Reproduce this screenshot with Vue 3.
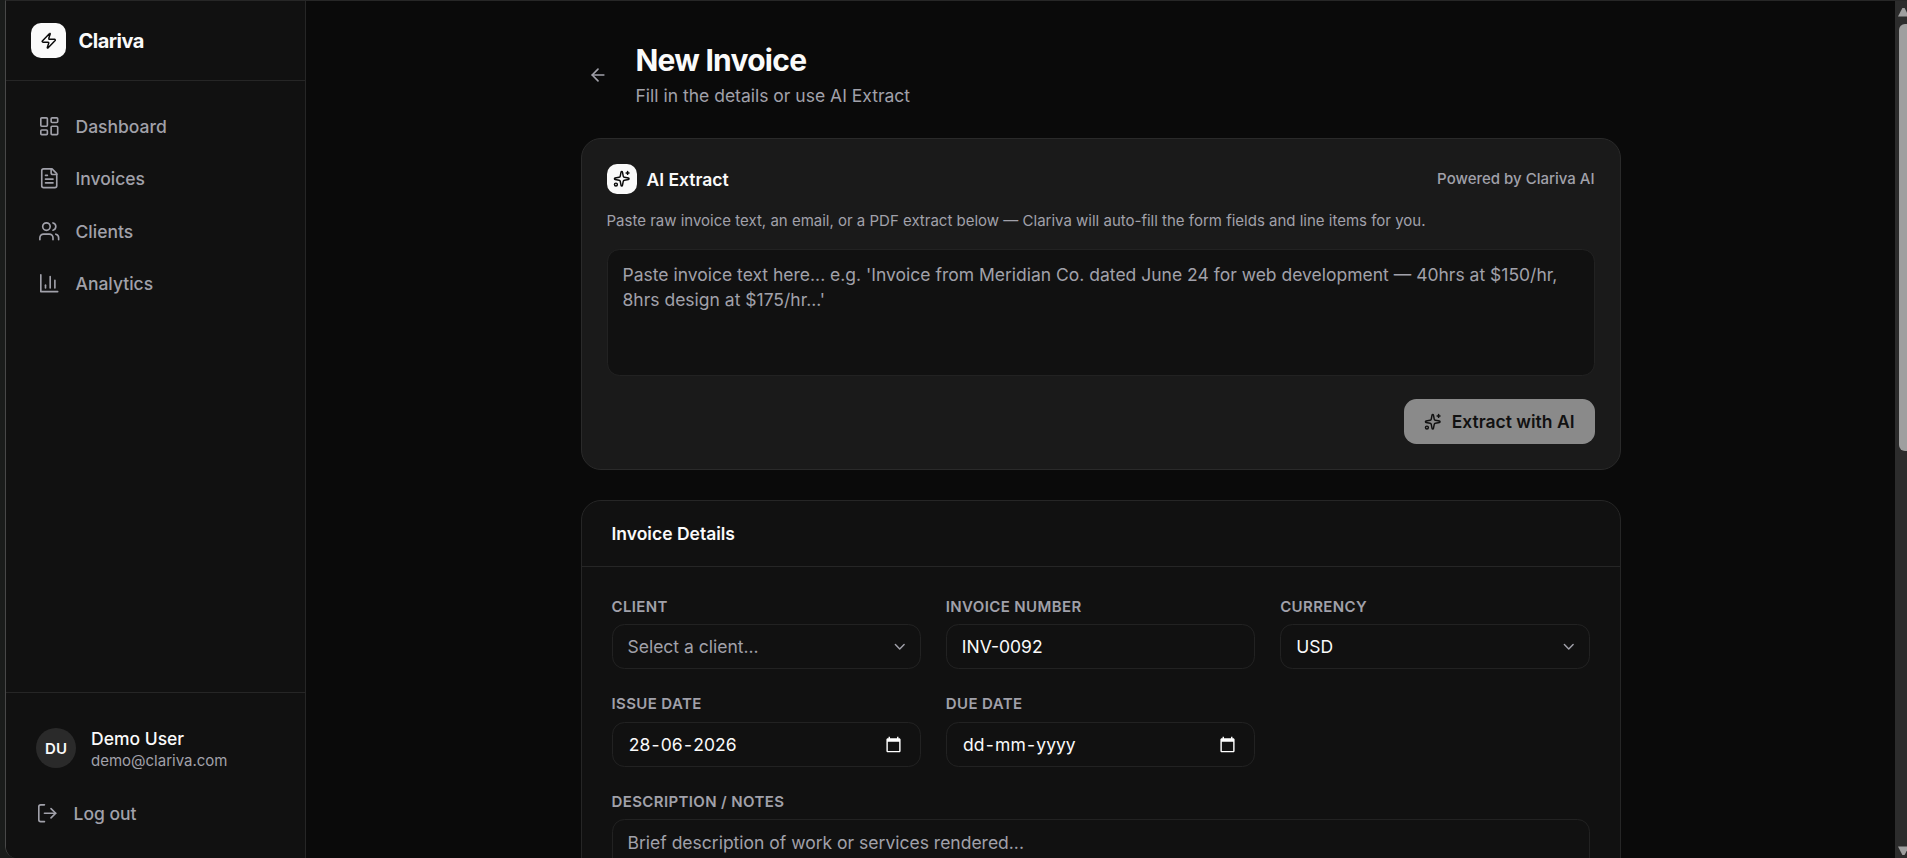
<template>
  <div class="window">
    <div class="app">
      <aside class="sidebar">
        <div class="brand">
          <span class="brand-mark">
            <svg class="icon icon-sm" viewBox="0 0 24 24"><path d="M4 14a1 1 0 0 1-.78-1.63l9.9-10.2a.5.5 0 0 1 .86.46l-1.92 6.02A1 1 0 0 0 13 10h7a1 1 0 0 1 .78 1.63l-9.9 10.2a.5.5 0 0 1-.86-.46l1.92-6.02A1 1 0 0 0 11 14z" /></svg>
          </span>
          <span class="brand-name">Clariva</span>
        </div>

        <nav class="nav">
          <a v-for="item in navItems" :key="item.label" class="nav-item">
            <svg class="icon icon-nav" viewBox="0 0 24 24">
              <path v-for="d in item.paths" :key="d" :d="d" />
            </svg>
            <span>{{ item.label }}</span>
          </a>
        </nav>

        <div class="account">
          <div class="user">
            <span class="avatar">DU</span>
            <div class="user-text">
              <span class="user-name">Demo User</span>
              <span class="user-email">demo@clariva.com</span>
            </div>
          </div>
          <a class="logout">
            <svg class="icon icon-nav" viewBox="0 0 24 24">
              <path d="M9 21H5a2 2 0 0 1-2-2V5a2 2 0 0 1 2-2h4" />
              <path d="m16 17 5-5-5-5" />
              <path d="M21 12H9" />
            </svg>
            <span>Log out</span>
          </a>
        </div>
      </aside>

      <main class="main">
        <div class="content">
          <header class="page-head">
            <button class="back" type="button" aria-label="Back">
              <svg class="icon icon-back" viewBox="0 0 24 24"><path d="m12 19-7-7 7-7" /><path d="M19 12H5" /></svg>
            </button>
            <div class="page-text">
              <h1>New Invoice</h1>
              <p>Fill in the details or use AI Extract</p>
            </div>
          </header>

          <section class="ai-card">
            <div class="ai-head">
              <span class="ai-mark">
                <svg class="icon icon-sm" viewBox="0 0 24 24">
                  <path v-for="d in sparkles" :key="d" :d="d" />
                  <circle cx="4" cy="20" r="2" />
                </svg>
              </span>
              <h2>AI Extract</h2>
              <span class="powered">Powered by Clariva AI</span>
            </div>
            <p class="ai-hint">Paste raw invoice text, an email, or a PDF extract below — Clariva will auto-fill the form fields and line items for you.</p>
            <textarea
              v-model="rawText"
              class="ai-input"
              placeholder="Paste invoice text here... e.g. 'Invoice from Meridian Co. dated June 24 for web development — 40hrs at $150/hr, 8hrs design at $175/hr...'"
            ></textarea>
            <div class="ai-actions">
              <button class="extract" type="button" :disabled="!rawText">
                <svg class="icon icon-sm" viewBox="0 0 24 24">
                  <path v-for="d in sparkles" :key="d" :d="d" />
                  <circle cx="4" cy="20" r="2" />
                </svg>
                <span>Extract with AI</span>
              </button>
            </div>
          </section>

          <section class="details">
            <h2 class="details-head">Invoice Details</h2>
            <div class="grid">
              <div v-for="field in fields" :key="field.label" class="field">
                <span class="label">{{ field.label }}</span>
                <div :class="['control', field.type, { muted: field.placeholder }]">
                  <span v-if="field.type === 'date'"><span v-for="(part, i) in field.value.split('-')" :key="i"><template v-if="i">-</template><span class="date-part">{{ part }}</span></span></span>
                  <span v-else>{{ field.value }}</span>
                  <svg v-if="field.type === 'select'" class="icon chevron" viewBox="0 0 24 24"><path d="m6 9 6 6 6-6" /></svg>
                  <svg v-if="field.type === 'date'" class="calendar" viewBox="0 0 24 24"><path d="M20 3h-1V1h-2v2H7V1H5v2H4c-1.1 0-2 .9-2 2v16c0 1.1.9 2 2 2h16c1.1 0 2-.9 2-2V5c0-1.1-.9-2-2-2zm0 18H4V8h16v13z" /></svg>
                </div>
              </div>
              <div class="field wide">
                <span class="label">Description / Notes</span>
                <textarea v-model="notes" class="notes" placeholder="Brief description of work or services rendered..."></textarea>
              </div>
            </div>
          </section>
        </div>
      </main>

      <div class="scrollbar">
        <svg class="arrow" viewBox="0 0 12 10"><path d="M3 9.5 7.4 1h2.2L14 9.5z" /></svg>
        <div class="thumb"></div>
        <svg class="arrow" viewBox="0 0 12 10"><path d="M3 0.5 7.4 9h2.2L14 .5z" /></svg>
      </div>
    </div>
  </div>
</template>

<script setup>
import { ref } from 'vue'

const rawText = ref('')
const notes = ref('')

const navItems = [
  {
    label: 'Dashboard',
    paths: [
      'M4 3h5a1 1 0 0 1 1 1v7a1 1 0 0 1-1 1H4a1 1 0 0 1-1-1V4a1 1 0 0 1 1-1z',
      'M15 3h5a1 1 0 0 1 1 1v3a1 1 0 0 1-1 1h-5a1 1 0 0 1-1-1V4a1 1 0 0 1 1-1z',
      'M15 12h5a1 1 0 0 1 1 1v7a1 1 0 0 1-1 1h-5a1 1 0 0 1-1-1v-7a1 1 0 0 1 1-1z',
      'M4 16h5a1 1 0 0 1 1 1v3a1 1 0 0 1-1 1H4a1 1 0 0 1-1-1v-3a1 1 0 0 1 1-1z'
    ]
  },
  {
    label: 'Invoices',
    paths: [
      'M15 2H6a2 2 0 0 0-2 2v16a2 2 0 0 0 2 2h12a2 2 0 0 0 2-2V7Z',
      'M14 2v4a2 2 0 0 0 2 2h4',
      'M10 9H8',
      'M16 13H8',
      'M16 17H8'
    ]
  },
  {
    label: 'Clients',
    paths: [
      'M16 21v-2a4 4 0 0 0-4-4H6a4 4 0 0 0-4 4v2',
      'M9 3a4 4 0 1 0 0 8a4 4 0 1 0 0-8',
      'M22 21v-2a4 4 0 0 0-3-3.87',
      'M16 3.13a4 4 0 0 1 0 7.75'
    ]
  },
  {
    label: 'Analytics',
    paths: ['M3 3v18h18', 'M18 17V9', 'M13 17V5', 'M8 17v-3']
  }
]

const sparkles = [
  'M11.017 2.814a1 1 0 0 1 1.966 0l1.051 5.558a2 2 0 0 0 1.594 1.594l5.558 1.051a1 1 0 0 1 0 1.966l-5.558 1.051a2 2 0 0 0-1.594 1.594l-1.051 5.558a1 1 0 0 1-1.966 0l-1.051-5.558a2 2 0 0 0-1.594-1.594l-5.558-1.051a1 1 0 0 1 0-1.966l5.558-1.051a2 2 0 0 0 1.594-1.594z',
  'M20 2v4',
  'M22 4h-4'
]

const fields = [
  { label: 'Client', type: 'select', value: 'Select a client...', placeholder: true },
  { label: 'Invoice Number', type: 'text', value: 'INV-0092' },
  { label: 'Currency', type: 'select', value: 'USD' },
  { label: 'Issue Date', type: 'date', value: '28-06-2026' },
  { label: 'Due Date', type: 'date', value: 'dd-mm-yyyy' }
]
</script>

<style>
body {
  background: #1a1c1b;
  overflow: hidden;
}
</style>

<style scoped>
* {
  box-sizing: border-box;
}

.window {
  height: 858px;
  padding-left: 5px;
  font-family: Inter, 'Liberation Sans', sans-serif;
  font-size: 17.5px;
  line-height: 25px;
  color: #fafafa;
  white-space: nowrap;
}

.app {
  display: flex;
  height: 858px;
  background: #0a0a0a;
  border-top: 1px solid #272727;
  border-left: 1px solid #484848;
  border-bottom-left-radius: 12px;
  overflow: hidden;
}

h1,
h2,
p {
  margin: 0;
}

.icon {
  flex-shrink: 0;
  fill: none;
  stroke: currentColor;
  stroke-width: 2;
  stroke-linecap: round;
  stroke-linejoin: round;
}

.icon-sm {
  width: 17.5px;
  height: 17.5px;
}

.icon-nav {
  width: 22.5px;
  height: 22.5px;
  stroke-width: 1.75;
}

.icon-back {
  width: 20px;
  height: 20px;
}

/* Sidebar */
.sidebar {
  display: flex;
  flex-direction: column;
  flex-shrink: 0;
  width: 300px;
  background: #111;
  border-right: 1px solid #262626;
}

.brand {
  display: flex;
  align-items: center;
  gap: 12.5px;
  height: 80px;
  padding: 0 25px;
  border-bottom: 1px solid #262626;
}

.brand-mark {
  display: grid;
  place-items: center;
  width: 35px;
  height: 35px;
  border-radius: 10px;
  background: #fafafa;
  color: #0a0a0a;
}

.brand-name {
  padding-top: 1px;
  font-size: 20px;
  font-weight: 700;
  letter-spacing: -0.5px;
}

.nav {
  display: flex;
  flex: 1;
  flex-direction: column;
  gap: 2.5px;
  padding: 20px 15px;
}

.nav-item {
  display: flex;
  align-items: center;
  gap: 15px;
  height: 50px;
  padding: 0 17px;
  color: #a1a1aa;
  font-weight: 500;
}

.account {
  height: 166px;
  padding: 35px 30px 0;
  border-top: 1px solid #262626;
}

.user {
  display: flex;
  align-items: flex-start;
  gap: 15px;
}

.avatar {
  display: grid;
  place-items: center;
  width: 40px;
  height: 40px;
  border-radius: 50%;
  background: #2a2a2a;
  font-size: 15px;
  font-weight: 600;
}

.user-text {
  display: flex;
  flex-direction: column;
}

.user-name {
  font-weight: 500;
  line-height: 22px;
}

.user-email {
  color: #a1a1aa;
  font-size: 15px;
  line-height: 22px;
}

.logout {
  display: flex;
  align-items: center;
  gap: 15px;
  margin-top: 29px;
  color: #a1a1aa;
  font-weight: 500;
}

/* Page */
.main {
  flex: 1;
  display: flex;
  justify-content: center;
  overflow: hidden;
}

.content {
  width: 1040px;
  padding-top: 39px;
}

.page-head {
  display: flex;
  align-items: center;
  gap: 20px;
  height: 70px;
  margin-bottom: 28px;
}

.back {
  display: grid;
  place-items: center;
  width: 35px;
  height: 35px;
  padding: 0;
  border: 0;
  background: none;
  color: #a1a1aa;
}

.page-text h1 {
  font-size: 30px;
  font-weight: 700;
  line-height: 40px;
  letter-spacing: -0.75px;
}

.page-text p {
  margin-top: 2px;
  color: #a1a1aa;
  line-height: 28px;
}

.ai-card {
  height: 332px;
  padding: 25px;
  background: #1a1a1a;
  border: 1px solid #2a2a2a;
  border-radius: 20px;
}

.ai-head {
  display: flex;
  align-items: center;
  gap: 10px;
}

.ai-mark {
  display: grid;
  place-items: center;
  width: 30px;
  height: 30px;
  border-radius: 10px;
  background: #fafafa;
  color: #0a0a0a;
}

.ai-head h2 {
  font-size: 17.5px;
  font-weight: 600;
}

.powered {
  margin-left: auto;
  padding-bottom: 2px;
  color: #a1a1aa;
  font-size: 15px;
  font-weight: 500;
}

.ai-hint {
  margin: 14px 0 16px;
  color: #a1a1aa;
  font-size: 15px;
}

.ai-input,
.notes {
  display: block;
  width: 100%;
  margin: 0;
  padding: 12px 15px;
  background: #111;
  border: 1px solid #222;
  border-radius: 12.5px;
  color: #fafafa;
  font: inherit;
  outline: none;
  resize: none;
}

.ai-input {
  height: 127px;
}

.notes {
  height: 110px;
  padding-top: 10px;
}

.ai-input::placeholder,
.notes::placeholder {
  color: #a1a1aa;
}

.ai-actions {
  display: flex;
  justify-content: flex-end;
  margin-top: 23px;
}

.extract {
  display: flex;
  align-items: center;
  gap: 10px;
  height: 45px;
  padding: 0 20px;
  border: 0;
  border-radius: 12.5px;
  background: #fafafa;
  color: #0a0a0a;
  font: inherit;
  font-weight: 600;
}

.extract:disabled {
  opacity: 0.5;
}

/* Invoice form */
.details {
  margin-top: 30px;
  height: 500px;
  background: #111;
  border: 1px solid #262626;
  border-radius: 20px;
}

.details-head {
  padding: 20px 30px;
  border-bottom: 1px solid #262626;
  font-size: 17.5px;
  font-weight: 600;
}

.grid {
  display: grid;
  grid-template-columns: repeat(3, 1fr);
  gap: 25px;
  padding: 29.5px 30px 30px;
}

.field {
  display: flex;
  flex-direction: column;
  gap: 7.5px;
}

.wide {
  grid-column: 1 / -1;
}

.label {
  color: #a1a1aa;
  font-size: 15px;
  font-weight: 600;
  line-height: 20px;
  letter-spacing: 0.375px;
  text-transform: uppercase;
}

.control {
  display: flex;
  align-items: center;
  justify-content: space-between;
  height: 45px;
  padding: 0 11px 0 15px;
  border: 1px solid #222;
  border-radius: 12.5px;
}

.date {
  padding: 0 18px 0 15px;
}

.date-part {
  padding: 0 1.25px;
}

.muted {
  color: #a1a1aa;
}

.chevron {
  width: 17.5px;
  height: 17.5px;
  color: #a1a1aa;
}

.calendar {
  width: 17px;
  height: 17px;
  fill: #fff;
}

/* Scrollbar */
.scrollbar {
  display: flex;
  flex-direction: column;
  flex-shrink: 0;
  width: 12px;
  padding: 6px 0 2px;
  background: #2c2c2c;
}

.arrow {
  width: 12px;
  height: 10px;
  fill: #9f9f9f;
}

.arrow:last-child {
  margin-top: auto;
}

.thumb {
  height: 427px;
  margin: 7px 0 0 4px;
  border-radius: 6px 0 0 6px;
  background: #9f9f9f;
}
</style>
